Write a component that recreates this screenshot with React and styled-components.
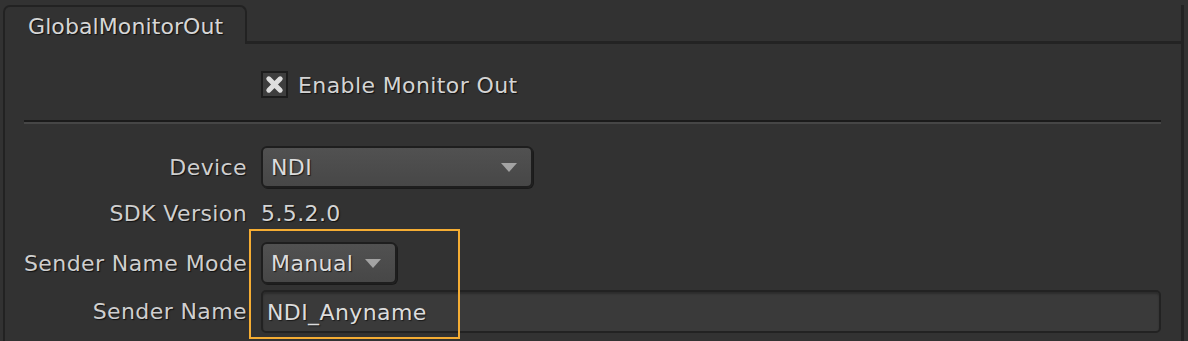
import React from "react";
import styled, { createGlobalStyle } from "styled-components";

const GlobalStyle = createGlobalStyle`
  html, body {
    margin: 0;
    padding: 0;
    background: #323232;
    overflow: hidden;
  }
  body {
    font-family: "DejaVu Sans", Verdana, sans-serif;
    font-size: 22px;
    letter-spacing: 0.4px;
    color: #d2d2d2;
  }
`;

const Page = styled.div`
  position: relative;
  display: flex;
  flex-direction: column;
  width: 1188px;
  height: 341px;
  padding: 0 4px 0 3px;
  box-sizing: border-box;
  overflow: hidden;
`;

const TabBar = styled.div`
  display: flex;
  padding-top: 5px;
  height: 44px;
  box-sizing: border-box;
`;

const Tab = styled.div`
  width: 244px;
  box-sizing: border-box;
  border: 2px solid #222;
  border-bottom: none;
  border-radius: 7px 7px 0 0;
  padding: 7px 0 0 23px;
  letter-spacing: 0.1px;
  text-shadow: 1px 1px 1px #111;
  color: #d6d6d6;
`;

const TabFill = styled.div`
  flex: 1;
  border-bottom: 3px solid #232323;
  border-right: 3px solid #232323;
`;

const Panel = styled.div`
  flex: 1;
  display: flex;
  flex-direction: column;
  border-left: 2px solid #222;
  border-right: 3px solid #232323;
  padding: 26px 20px 0 19px;
`;

const Row = styled.div`
  display: grid;
  grid-template-columns: 223px 1fr;
  column-gap: 14px;
  align-items: center;
  height: ${p => p.h}px;
  margin-top: ${p => p.mt || 0}px;
`;

const Label = styled.div`
  text-align: right;
  white-space: nowrap;
  text-shadow: 1px 1px 1px #111;
  color: #cfcfcf;
`;

const Value = styled.div`
  text-shadow: 1px 1px 1px #111;
  color: #d4d4d4;
`;

const CheckRow = styled.div`
  display: flex;
  align-items: center;
  gap: 10px;
`;

const Box = styled.div`
  width: 27px;
  height: 27px;
  box-sizing: border-box;
  border: 2px solid #1d1d1d;
  background: #3e3e3e;
  display: flex;
  align-items: center;
  justify-content: center;
`;

const CheckText = styled.span`
  margin-top: 3px;
  text-shadow: 1px 1px 1px #111;
  color: #d4d4d4;
`;

const Separator = styled.div`
  margin-top: 23px;
  height: 0;
  border-top: 2px solid #1b1b1b;
  border-bottom: 2px solid #464646;
`;

const Select = styled.div`
  width: ${p => p.w}px;
  height: 42px;
  box-sizing: border-box;
  display: flex;
  align-items: center;
  justify-content: space-between;
  padding: 0 14px 0 8px;
  border: 2px solid #1e1e1e;
  border-radius: 6px;
  background: linear-gradient(180deg, #515151 0%, #474747 100%);
  box-shadow: 1px 1px 0 #1a1a1a;
  color: #dcdcdc;
  text-shadow: 1px 1px 1px #1a1a1a;
`;

const Arrow = styled.span`
  width: 0;
  height: 0;
  border-left: 8px solid transparent;
  border-right: 8px solid transparent;
  border-top: 9px solid #a3a3a3;
  margin-top: 1px;
`;

const TextInput = styled.div`
  height: 43px;
  box-sizing: border-box;
  display: flex;
  align-items: center;
  padding: 2px 0 0 4px;
  border: 2px solid #222;
  border-radius: 5px;
  background: #3a3a3a;
  box-shadow: inset 0 2px 2px rgba(0, 0, 0, 0.25);
  color: #dcdcdc;
  text-shadow: 1px 1px 1px #1a1a1a;
`;

const Highlight = styled.div`
  position: absolute;
  left: 249px;
  top: 229px;
  width: 211px;
  height: 110px;
  box-sizing: border-box;
  border: 2px solid #f5ad33;
  pointer-events: none;
`;

const CrossIcon = () => (
  <svg width="19" height="19" viewBox="0 0 19 19">
    <path
      d="M3.8 3.8 L15.2 15.2 M15.2 3.8 L3.8 15.2"
      stroke="#dedede"
      strokeWidth="5"
      strokeLinecap="round"
    />
  </svg>
);

export default function App() {
  return (
    <Page>
      <GlobalStyle />
      <TabBar>
        <Tab>GlobalMonitorOut</Tab>
        <TabFill />
      </TabBar>
      <Panel>
        <Row h={27}>
          <span />
          <CheckRow>
            <Box>
              <CrossIcon />
            </Box>
            <CheckText>Enable Monitor Out</CheckText>
          </CheckRow>
        </Row>
        <Separator />
        <Row h={42} mt={22}>
          <Label>Device</Label>
          <Select w={272}>
            <span>NDI</span>
            <Arrow />
          </Select>
        </Row>
        <Row h={42} mt={4}>
          <Label>SDK Version</Label>
          <Value>5.5.2.0</Value>
        </Row>
        <Row h={42} mt={8}>
          <Label>Sender Name Mode</Label>
          <Select w={136}>
            <span>Manual</span>
            <Arrow />
          </Select>
        </Row>
        <Row h={43} mt={6}>
          <Label>Sender Name</Label>
          <TextInput>NDI_Anyname</TextInput>
        </Row>
      </Panel>
      <Highlight />
    </Page>
  );
}
